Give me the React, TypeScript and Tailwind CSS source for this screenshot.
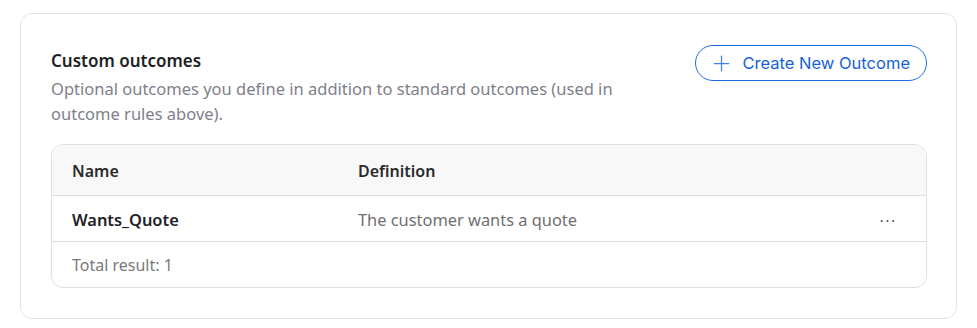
import { Plus } from 'lucide-react';

export default function App() {
  return (
    <div className="min-h-screen bg-white px-5 pt-[13px] font-['Noto_Sans',sans-serif]">
      <section className="h-[306px] rounded-xl border border-[#e3e3e3] bg-white pl-[30px] pr-[29px] pt-[35px]">
        <div className="flex items-start justify-between">
          <div className="max-w-[590px]">
            <h2 className="text-[17px] font-semibold leading-6 text-[#1c1f24]">Custom outcomes</h2>
            <p className="mt-[3px] text-[16.5px] leading-[25px] text-[#80808a]">
              Optional outcomes you define in addition to standard outcomes (used in outcome rules above).
            </p>
          </div>
          <button
            type="button"
            className="-mt-[4px] flex h-[36px] items-center gap-[9px] rounded-full border border-[#1a6ee6] pl-[13px] pr-[16px] font-['Inter',sans-serif] text-[16.5px] text-[#1662d9]"
          >
            <Plus size={25} strokeWidth={1.2} className="text-[#3b82f6]" />
            Create New Outcome
          </button>
        </div>

        <div className="mt-[18px] overflow-hidden rounded-xl border border-[#e0e0e0]">
          <div className="grid h-[51px] grid-cols-[286px_1fr_60px] items-center border-b border-[#dedede] bg-[#f8f8f8] px-5 pt-[1px] text-[16px] font-semibold text-[#2a2a2a]">
            <span>Name</span>
            <span>Definition</span>
            <span />
          </div>
          <div className="grid h-[46px] grid-cols-[286px_1fr_60px] items-center border-b border-[#dedede] px-5 pt-[3px] text-[16.4px]">
            <span className="font-semibold text-[#1e2126]">Wants_Quote</span>
            <span className="text-[#6f6f6f]">The customer wants a quote</span>
            <span className="pr-[9px] text-right text-[14px] tracking-[2px] text-[#444]">···</span>
          </div>
          <div className="flex h-[45px] items-center px-5 pt-[1px] text-[16px] text-[#7a7a7a]">Total result: 1</div>
        </div>
      </section>
    </div>
  );
}
